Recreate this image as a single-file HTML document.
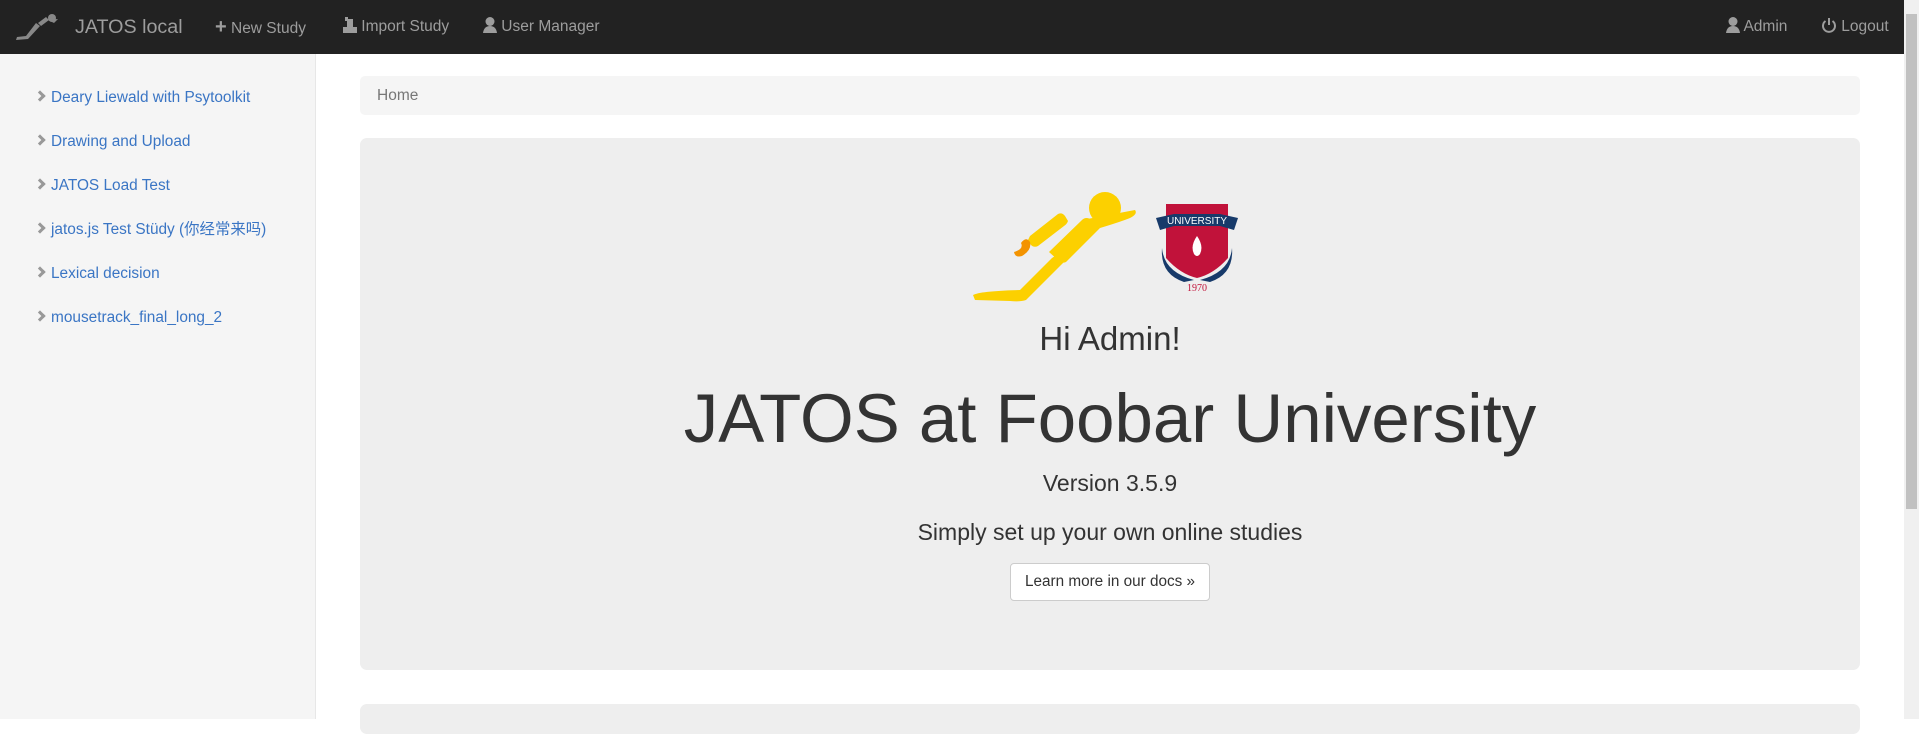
<!DOCTYPE html>
<html><head><meta charset="utf-8"><style>
*{box-sizing:border-box;margin:0;padding:0}
body{width:1919px;height:719px;overflow:hidden;background:#fff;font-family:"Liberation Sans","Noto Sans CJK SC",sans-serif;position:relative}
.nav{position:absolute;left:0;top:0;width:1904px;height:54px;background:#222}
.nav .t{position:absolute;top:0;line-height:54px;color:#9d9d9d;font-size:15.5px}
.side{position:absolute;left:0;top:54px;width:316px;height:665px;background:#f5f5f5;border-right:1px solid #e7e7e7}
.side .i{position:absolute;left:36px;font-size:15.4px;color:#3a75c4;line-height:20px}
.side .i b{display:inline-block;width:8px;height:8px;border-right:3px solid #999;border-top:3px solid #999;transform:rotate(45deg);margin-right:7px;position:relative;top:-2px}
.bc{position:absolute;left:360px;top:76px;width:1500px;height:39px;background:#f5f5f5;border-radius:5px;color:#777;font-size:15.5px;line-height:39px;padding-left:17px}
.jb{position:absolute;left:360px;top:138px;width:1500px;height:532px;background:#eee;border-radius:7px;text-align:center;color:#333}
.p2{position:absolute;left:360px;top:704px;width:1500px;height:30px;background:#eee;border-radius:7px}
.sb{position:absolute;left:1904px;top:0;width:15px;height:719px;background:#f0f0f0}
.sb div{position:absolute;left:2px;top:14px;width:11px;height:495px;background:#c1c1c1}
.ab{position:absolute;left:0;width:1500px;text-align:center}
.btn{position:absolute;left:650px;top:425px;width:200px;height:38px;background:#fff;border:1px solid #ccc;border-radius:4px;font-size:15.3px;line-height:36px;color:#333}
</style></head><body>
<div class="nav">
<svg style="position:absolute;left:14px;top:14px" width="46" height="28" viewBox="0 0 46 28"><path d="M2 26 L14 25 L26 12 L22 9 L12 22 L3 23Z" fill="#888"/><path d="M24 9 L32 3 L35 6 L27 12Z" fill="#888"/><circle cx="38" cy="4" r="4" fill="#888"/><path d="M34 6 L44 5 L40 9Z" fill="#888"/></svg>
<div class="t" style="left:75px;font-size:19.7px">JATOS local</div>
<div class="t" style="left:215px"><span style="font-weight:bold;font-size:20px">+</span> New Study</div>
<div class="t" style="left:343px"><svg width="14" height="16" viewBox="0 0 14 16" style="vertical-align:-2px"><rect x="0" y="10" width="14" height="6" fill="#9d9d9d"/><rect x="4" y="2" width="6" height="8" fill="#9d9d9d"/><rect x="2" y="0" width="3" height="4" fill="#9d9d9d"/></svg> Import Study</div>
<div class="t" style="left:483px"><svg width="14" height="16" viewBox="0 0 14 16" style="vertical-align:-2px"><circle cx="7" cy="4.5" r="4.5" fill="#9d9d9d"/><path d="M0 16 Q1 9 7 9 Q13 9 14 16Z" fill="#9d9d9d"/></svg> User Manager</div>
<div class="t" style="left:1726px"><svg width="14" height="16" viewBox="0 0 14 16" style="vertical-align:-2px"><circle cx="7" cy="4.5" r="4.5" fill="#9d9d9d"/><path d="M0 16 Q1 9 7 9 Q13 9 14 16Z" fill="#9d9d9d"/></svg> Admin</div>
<div class="t" style="left:1821px"><svg width="16" height="16" viewBox="0 0 16 16" style="vertical-align:-2px"><path d="M4.5 4 A6 6 0 1 0 11.5 4" fill="none" stroke="#9d9d9d" stroke-width="2"/><line x1="8" y1="1" x2="8" y2="8" stroke="#9d9d9d" stroke-width="2"/></svg> Logout</div>
</div>
<div class="side">
<div class="i" style="top:34px"><b></b>Deary Liewald with Psytoolkit</div>
<div class="i" style="top:78px"><b></b>Drawing and Upload</div>
<div class="i" style="top:122px"><b></b>JATOS Load Test</div>
<div class="i" style="top:166px"><b></b>jatos.js Test Stüdy (你经常来吗)</div>
<div class="i" style="top:210px"><b></b>Lexical decision</div>
<div class="i" style="top:254px"><b></b>mousetrack_final_long_2</div>
</div>
<div class="bc">Home</div>
<div class="jb">
<svg style="position:absolute;left:610px;top:50px" width="170" height="115" viewBox="0 0 170 115"><path d="M3 107 Q10 103 50 102 L82 70 Q90 64 96 72 L56 112 Q50 114 40 113 L5 112Z" fill="#fcd000"/><path d="M79 64 L112 32 Q116 28 122 32 L130 40 L96 74 Q92 76 88 72Z" fill="#fcd000"/><path d="M60 48 L88 26 Q92 24 95 28 L98 33 Q97 36 94 38 L68 58 Q64 60 61 57 L58 52Z" fill="#fcd000"/><circle cx="135" cy="20" r="16" fill="#fcd000"/><path d="M112 32 L165 22 Q168 26 160 30 Q150 34 130 40Z" fill="#fcd000"/><path d="M52 68 Q62 62 60 54 Q56 48 51 55 Q54 61 44 64 Q45 70 52 68Z" fill="#f39300"/></svg>
<svg style="position:absolute;left:794px;top:60px" width="86" height="94" viewBox="0 0 86 94"><path d="M12 6 L74 6 L74 60 Q60 76 43 80 Q26 76 12 60Z" fill="#c1123a"/><path d="M2 20 L20 16 L66 16 L84 20 L80 32 L66 28 L20 28 L6 32Z" fill="#173a6a"/><text x="43" y="26" font-size="10" fill="#fff" text-anchor="middle" font-family="Liberation Sans">UNIVERSITY</text><path d="M43 38 Q36 48 40 56 Q43 60 46 56 Q50 48 43 38Z" fill="#fff"/><path d="M8 50 Q10 74 40 82 L30 84 Q6 76 8 50Z M78 50 Q76 74 46 82 L56 84 Q80 76 78 50Z" fill="#173a6a"/><text x="43" y="93" font-size="10" fill="#c1123a" text-anchor="middle" font-family="Liberation Serif">1970</text></svg>
<div class="ab" style="top:180px;font-size:33px;line-height:42px">Hi Admin!</div>
<div class="ab" style="top:236px;font-size:69px;line-height:90px">JATOS at Foobar University</div>
<div class="ab" style="top:329px;font-size:23px;line-height:32px">Version 3.5.9</div>
<div class="ab" style="top:378px;font-size:23px;line-height:32px">Simply set up your own online studies</div>
<div class="btn">Learn more in our docs »</div>
</div>
<div class="p2"></div>
<div class="sb"><div></div></div>
</body></html>
